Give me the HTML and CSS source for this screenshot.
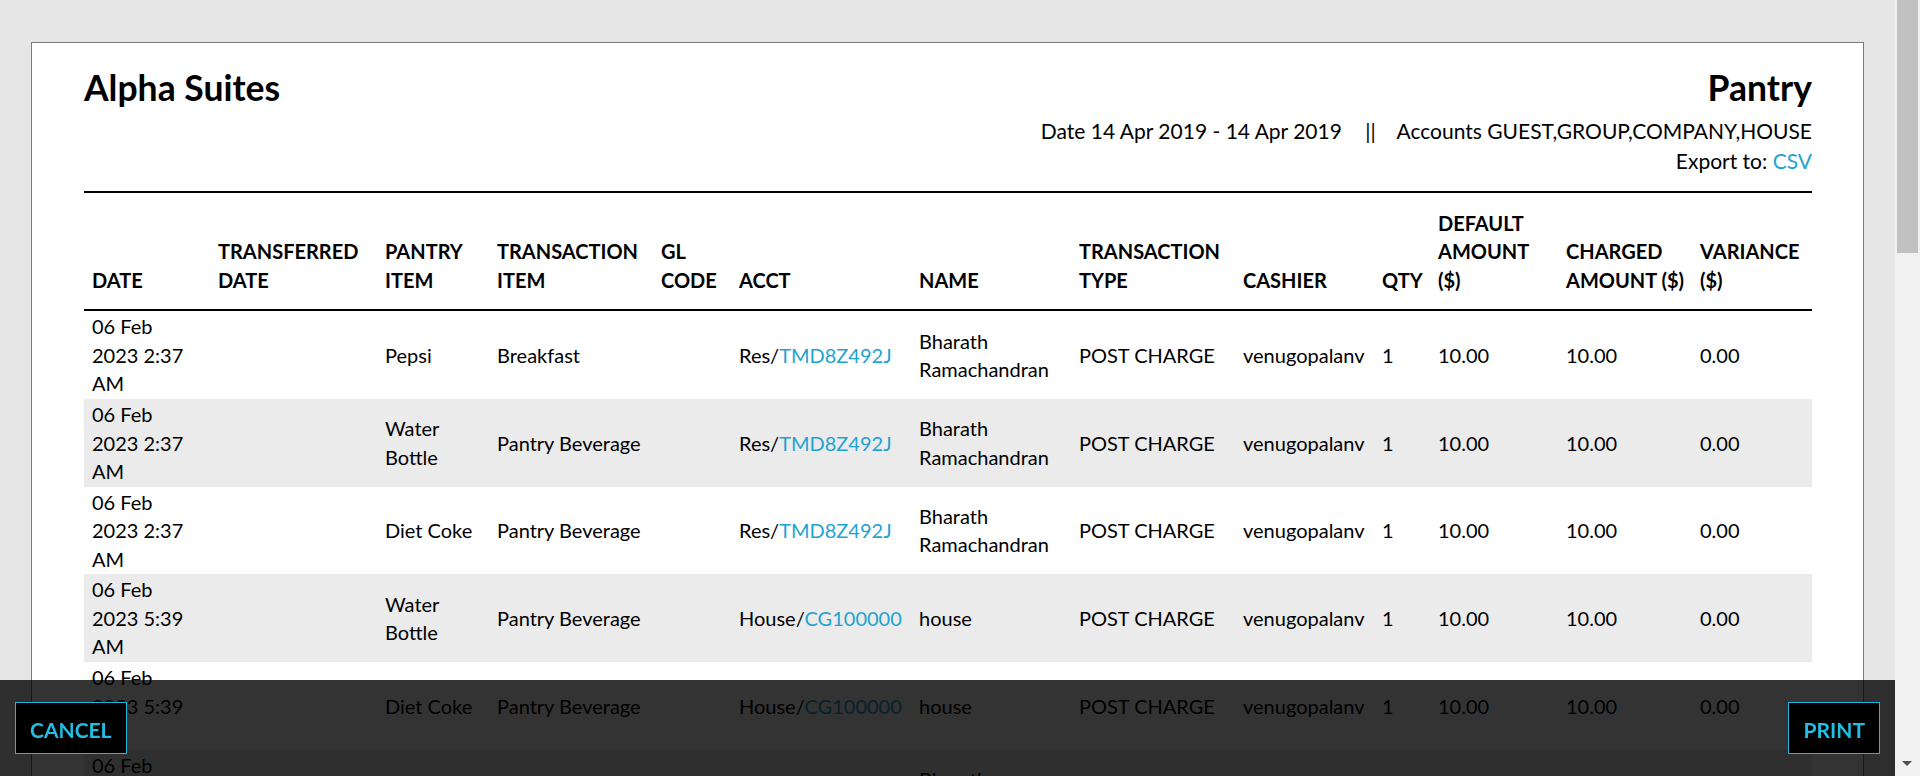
FILE: index.html
```html
<!DOCTYPE html>
<html lang="en">
<head>
    <meta charset="UTF-8">
    <meta name="viewport" content="width=device-width, initial-scale=1.0">
    <title>Pantry Report - Alpha Suites</title>
    <link rel="stylesheet" href="styles.css">
</head>
<body>
    <div class="page">
        <div class="report">
            <div class="report-head">
                <h1 class="hotel-name">Alpha Suites</h1>
                <div class="report-meta">
                    <h1 class="report-title">Pantry</h1>
                    <p>Date 14 Apr 2019 - 14 Apr 2019 <span class="sep">||</span> Accounts GUEST,GROUP,COMPANY,HOUSE</p>
                    <p>Export to: <a href="#">CSV</a></p>
                </div>
            </div>

            <table class="report-table">
                <colgroup>
                    <col class="w-date">
                    <col class="w-transferred">
                    <col class="w-pantry">
                    <col class="w-item">
                    <col class="w-gl">
                    <col class="w-acct">
                    <col class="w-name">
                    <col class="w-type">
                    <col class="w-cashier">
                    <col class="w-qty">
                    <col class="w-default">
                    <col class="w-charged">
                    <col class="w-variance">
                </colgroup>
                <thead>
                    <tr>
                        <th class="col-date">Date</th>
                        <th>Transferred<br>Date</th>
                        <th>Pantry<br>Item</th>
                        <th>Transaction<br>Item</th>
                        <th>GL<br>Code</th>
                        <th>Acct</th>
                        <th>Name</th>
                        <th>Transaction<br>Type</th>
                        <th>Cashier</th>
                        <th>Qty</th>
                        <th>Default<br>Amount<br>($)</th>
                        <th>Charged<br>Amount ($)</th>
                        <th>Variance<br>($)</th>
                    </tr>
                </thead>
                <tbody>
                    <tr>
                        <td class="col-date">06 Feb 2023 2:37 AM</td>
                        <td></td>
                        <td>Pepsi</td>
                        <td>Breakfast</td>
                        <td></td>
                        <td class="col-acct">Res/<a href="#">TMD8Z492J</a></td>
                        <td>Bharath Ramachandran</td>
                        <td>POST CHARGE</td>
                        <td>venugopalanv</td>
                        <td>1</td>
                        <td>10.00</td>
                        <td>10.00</td>
                        <td>0.00</td>
                    </tr>
                    <tr>
                        <td class="col-date">06 Feb 2023 2:37 AM</td>
                        <td></td>
                        <td>Water Bottle</td>
                        <td>Pantry Beverage</td>
                        <td></td>
                        <td class="col-acct">Res/<a href="#">TMD8Z492J</a></td>
                        <td>Bharath Ramachandran</td>
                        <td>POST CHARGE</td>
                        <td>venugopalanv</td>
                        <td>1</td>
                        <td>10.00</td>
                        <td>10.00</td>
                        <td>0.00</td>
                    </tr>
                    <tr>
                        <td class="col-date">06 Feb 2023 2:37 AM</td>
                        <td></td>
                        <td>Diet Coke</td>
                        <td>Pantry Beverage</td>
                        <td></td>
                        <td class="col-acct">Res/<a href="#">TMD8Z492J</a></td>
                        <td>Bharath Ramachandran</td>
                        <td>POST CHARGE</td>
                        <td>venugopalanv</td>
                        <td>1</td>
                        <td>10.00</td>
                        <td>10.00</td>
                        <td>0.00</td>
                    </tr>
                    <tr>
                        <td class="col-date">06 Feb 2023 5:39 AM</td>
                        <td></td>
                        <td>Water Bottle</td>
                        <td>Pantry Beverage</td>
                        <td></td>
                        <td class="col-acct">House/<a href="#">CG100000</a></td>
                        <td>house</td>
                        <td>POST CHARGE</td>
                        <td>venugopalanv</td>
                        <td>1</td>
                        <td>10.00</td>
                        <td>10.00</td>
                        <td>0.00</td>
                    </tr>
                    <tr>
                        <td class="col-date">06 Feb 2023 5:39 AM</td>
                        <td></td>
                        <td>Diet Coke</td>
                        <td>Pantry Beverage</td>
                        <td></td>
                        <td class="col-acct">House/<a href="#">CG100000</a></td>
                        <td>house</td>
                        <td>POST CHARGE</td>
                        <td>venugopalanv</td>
                        <td>1</td>
                        <td>10.00</td>
                        <td>10.00</td>
                        <td>0.00</td>
                    </tr>
                    <tr>
                        <td class="col-date">06 Feb 2023 5:41 AM</td>
                        <td></td>
                        <td>Pepsi</td>
                        <td>Pantry Beverage</td>
                        <td></td>
                        <td class="col-acct">Res/<a href="#">TMD8Z492J</a></td>
                        <td>Bharath Ramachandran</td>
                        <td>POST CHARGE</td>
                        <td>venugopalanv</td>
                        <td>1</td>
                        <td>10.00</td>
                        <td>10.00</td>
                        <td>0.00</td>
                    </tr>
                </tbody>
            </table>
        </div>
    </div>

    <div class="action-bar">
        <button class="btn">Cancel</button>
        <button class="btn">Print</button>
    </div>

    <!-- fake window scrollbar -->
    <div class="scrollbar">
        <div class="scroll-thumb"></div>
        <div class="scroll-down"></div>
    </div>
</body>
</html>
```

FILE: styles.css
```css
* {
    margin: 0;
    padding: 0;
    box-sizing: border-box;
    font-family: 'Lato', 'Open Sans', sans-serif;
}

html, body {
    height: 100%;
    overflow: hidden;
}

body {
    background: #e6e6e6;
    color: #000;
    font-size: 20px;
    line-height: 1.42857;
}

a {
    color: #1fa3d1;
    text-decoration: none;
}

/* Page / card */
.page {
    margin-right: 25px;
    padding: 42px 31px 0;
}

.report {
    background: #fff;
    border: 1px solid #7b7b7b;
    border-bottom: none;
    padding: 24px 51px 0 52px;
}

/* Report header */
.report-head {
    display: flex;
    justify-content: space-between;
    align-items: flex-start;
    border-bottom: 2px solid #000;
    padding-bottom: 15px;
}

.hotel-name,
.report-title {
    font-size: 35.5px;
    font-weight: 700;
    line-height: 1.2;
}

.report-meta {
    text-align: right;
}

.report-meta p {
    font-size: 21px;
}

.report-title {
    margin-bottom: 6px;
}

.sep {
    margin: 0 16px 0 18px;
}

/* Table */
.report-table {
    width: 100%;
    border-collapse: collapse;
    table-layout: fixed;
}

.w-date { width: 126px; }
.w-transferred { width: 167px; }
.w-pantry { width: 112px; }
.w-item { width: 164px; }
.w-gl { width: 78px; }
.w-acct { width: 180px; }
.w-name { width: 160px; }
.w-type { width: 164px; }
.w-cashier { width: 139px; }
.w-qty { width: 56px; }
.w-default { width: 128px; }
.w-charged { width: 134px; }
.w-variance { width: 120px; }

.report-table th {
    font-weight: 700;
    text-transform: uppercase;
    text-align: left;
    vertical-align: bottom;
    white-space: nowrap;
    padding: 16px 8px 15px;
    border-bottom: 2px solid #000;
}

.report-table td {
    padding: 1px 8px;
    vertical-align: middle;
}

.report-table td.col-date {
    padding-right: 16px;
}

.report-table td.col-acct {
    white-space: nowrap;
}

.report-table tbody tr:nth-child(even) {
    background: #ebebeb;
}

/* Bottom action bar */
.action-bar {
    position: fixed;
    left: 0;
    right: 25px;
    bottom: 0;
    height: 96px;
    padding: 0 15px;
    display: flex;
    justify-content: space-between;
    align-items: center;
    background: rgba(0, 0, 0, 0.8);
}

.btn {
    height: 52px;
    padding: 3px 14px 0;
    background: #000;
    border: 1px solid #1fb6dc;
    color: #22bde2;
    font-size: 21px;
    font-weight: 700;
    text-transform: uppercase;
    cursor: pointer;
}

/* Scrollbar */
.scrollbar {
    position: fixed;
    top: 0;
    right: 0;
    bottom: 0;
    width: 25px;
    background: #f1f1f1;
}

.scroll-thumb {
    margin-left: 2px;
    width: 21px;
    height: 253px;
    background: #c1c1c1;
}

.scroll-down {
    position: absolute;
    left: 7px;
    bottom: 10px;
    width: 0;
    height: 0;
    border-left: 5px solid transparent;
    border-right: 5px solid transparent;
    border-top: 5px solid #505050;
}
```
